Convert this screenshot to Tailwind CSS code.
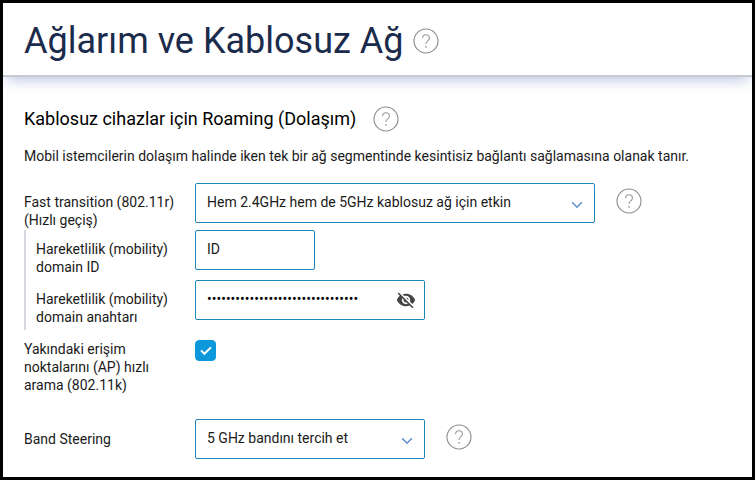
<!DOCTYPE html>
<html lang="tr">
<head>
    <meta charset="UTF-8">
    <title>Ağlarım ve Kablosuz Ağ</title>
    <meta name="viewport" content="width=device-width, initial-scale=1.0">
    <script src="https://cdn.jsdelivr.net/npm/@tailwindcss/browser@4"></script>
</head>
<body class="min-h-screen flex flex-col border-3 border-black bg-white font-[Roboto,sans-serif] text-sm leading-[18px] text-[#1a1a1a]">

    <!-- shared icons -->
    <svg class="hidden">
        <symbol id="icon-help" viewBox="0 0 26 26">
            <circle cx="13" cy="13" r="12" fill="none" stroke="#8c8c8c" stroke-width="1.1"/>
            <path d="M9.6 10.2C9.6 8 11 6.8 13 6.8s3.4 1.2 3.4 3.1c0 1.5-.8 2.2-1.7 3-1 .8-1.7 1.4-1.7 3.1" fill="none" stroke="#9a9a9a" stroke-width="1.1"/>
            <circle cx="13" cy="18.8" r="0.9" fill="#9a9a9a"/>
        </symbol>
        <symbol id="icon-chevron" viewBox="0 0 12 8">
            <path d="M1.2 1.2L6 6.2l4.8-5" fill="none" stroke="#5b8fcb" stroke-width="1.5"/>
        </symbol>
    </svg>

    <header class="h-[72px] flex items-center gap-2.5 px-[21px] pt-[3px] shadow-[0_2px_1px_#c6cad3,0_8px_14px_-4px_#b4bfde]">
        <h1 class="text-4xl text-[#1b2b4b]">Ağlarım ve Kablosuz Ağ</h1>
        <button type="button" aria-label="Yardım"><svg class="size-[26px]"><use href="#icon-help"/></svg></button>
    </header>

    <main class="px-[21px] pt-[30px]">
        <div class="flex items-center gap-[17px]">
            <h2 class="text-lg text-black">Kablosuz cihazlar için Roaming (Dolaşım)</h2>
            <button type="button" aria-label="Yardım"><svg class="size-[26px]"><use href="#icon-help"/></svg></button>
        </div>
        <p class="mt-3.5">Mobil istemcilerin dolaşım halinde iken tek bir ağ segmentinde kesintisiz bağlantı sağlamasına olanak tanır.</p>

        <form class="mt-[18px]">
            <div class="flex min-h-[47px]">
                <label for="fast-transition" class="w-[171px] shrink-0 pt-2.5">Fast transition (802.11r) (Hızlı geçiş)</label>
                <div class="relative w-[400px] h-10">
                    <select id="fast-transition" class="w-full h-full appearance-none rounded-xs border border-[#1c87b8] bg-white pl-[11px] pr-8 pb-0.5">
                        <option>Hem 2.4GHz hem de 5GHz kablosuz ağ için etkin</option>
                    </select>
                    <svg class="absolute right-3 top-[18px] w-3 h-2 pointer-events-none"><use href="#icon-chevron"/></svg>
                </div>
                <button type="button" aria-label="Yardım" class="ml-[21px] mt-[5px] self-start"><svg class="size-[26px]"><use href="#icon-help"/></svg></button>
            </div>

            <div class="border-l-2 border-[#d5d8df]">
                <div class="flex h-[50px]">
                    <label for="domain-id" class="w-[169px] shrink-0 pl-2.5 pr-4 pt-2.5">Hareketlilik (mobility) domain ID</label>
                    <input type="text" id="domain-id" value="ID" class="w-[120px] h-10 rounded-xs border border-[#1c87b8] px-[11px] pb-0.5">
                </div>
                <div class="flex h-[50px]">
                    <label for="domain-key" class="w-[169px] shrink-0 pl-2.5 pr-4 pt-2.5">Hareketlilik (mobility) domain anahtarı</label>
                    <div class="relative w-[230px] h-10">
                        <input type="password" id="domain-key" value="00000000000000000000000000000000" class="w-full h-full rounded-xs border border-[#1c87b8] pl-[11px] pr-10 pb-0.5 text-black">
                        <button type="button" aria-label="Göster" class="absolute right-[9px] top-2.5">
                            <svg class="size-5" viewBox="0 0 24 24" fill="#444"><path d="M12 7c2.76 0 5 2.24 5 5 0 .65-.13 1.26-.36 1.83l2.92 2.92c1.51-1.26 2.7-2.89 3.43-4.75-1.73-4.39-6-7.5-11-7.5-1.4 0-2.74.25-3.98.7l2.16 2.16C10.74 7.13 11.35 7 12 7zM2 4.27l2.28 2.28.46.46C3.08 8.3 1.78 10.02 1 12c1.73 4.39 6 7.5 11 7.5 1.55 0 3.03-.3 4.38-.84l.42.42L19.73 22 21 20.73 3.27 3 2 4.27zM7.53 9.8l1.55 1.55c-.05.21-.08.43-.08.65 0 1.66 1.34 3 3 3 .22 0 .44-.03.65-.08l1.55 1.55c-.67.33-1.41.53-2.2.53-2.76 0-5-2.24-5-5 0-.79.2-1.53.53-2.2zm4.31-.78l3.15 3.15.02-.16c0-1.66-1.34-3-3-3l-.17.01z"/></svg>
                        </button>
                    </div>
                </div>
            </div>

            <div class="flex pt-2.5">
                <label for="fast-search" class="w-[171px] shrink-0 pr-6">Yakındaki erişim noktalarını (AP) hızlı arama (802.11k)</label>
                <div class="relative size-[21px]">
                    <input type="checkbox" id="fast-search" checked class="block size-full appearance-none rounded-sm border border-[#0c98da] checked:bg-[#0c98da]">
                    <svg class="absolute inset-0 size-full pointer-events-none" viewBox="0 0 21 21"><path d="M6 10.4l3.4 3.4 6.6-6.4" fill="none" stroke="#fff" stroke-width="2"/></svg>
                </div>
            </div>

            <div class="flex pt-[25px] pb-2.5">
                <label for="band-steering" class="w-[171px] shrink-0 pt-[11px]">Band Steering</label>
                <div class="relative w-[230px] h-10">
                    <select id="band-steering" class="w-full h-full appearance-none rounded-xs border border-[#1c87b8] bg-white pl-[11px] pr-8 pb-0.5">
                        <option>5 GHz bandını tercih et</option>
                    </select>
                    <svg class="absolute right-3 top-[18px] w-3 h-2 pointer-events-none"><use href="#icon-chevron"/></svg>
                </div>
                <button type="button" aria-label="Yardım" class="ml-[21px] mt-[5px] self-start"><svg class="size-[26px]"><use href="#icon-help"/></svg></button>
            </div>
        </form>
    </main>

</body>
</html>
